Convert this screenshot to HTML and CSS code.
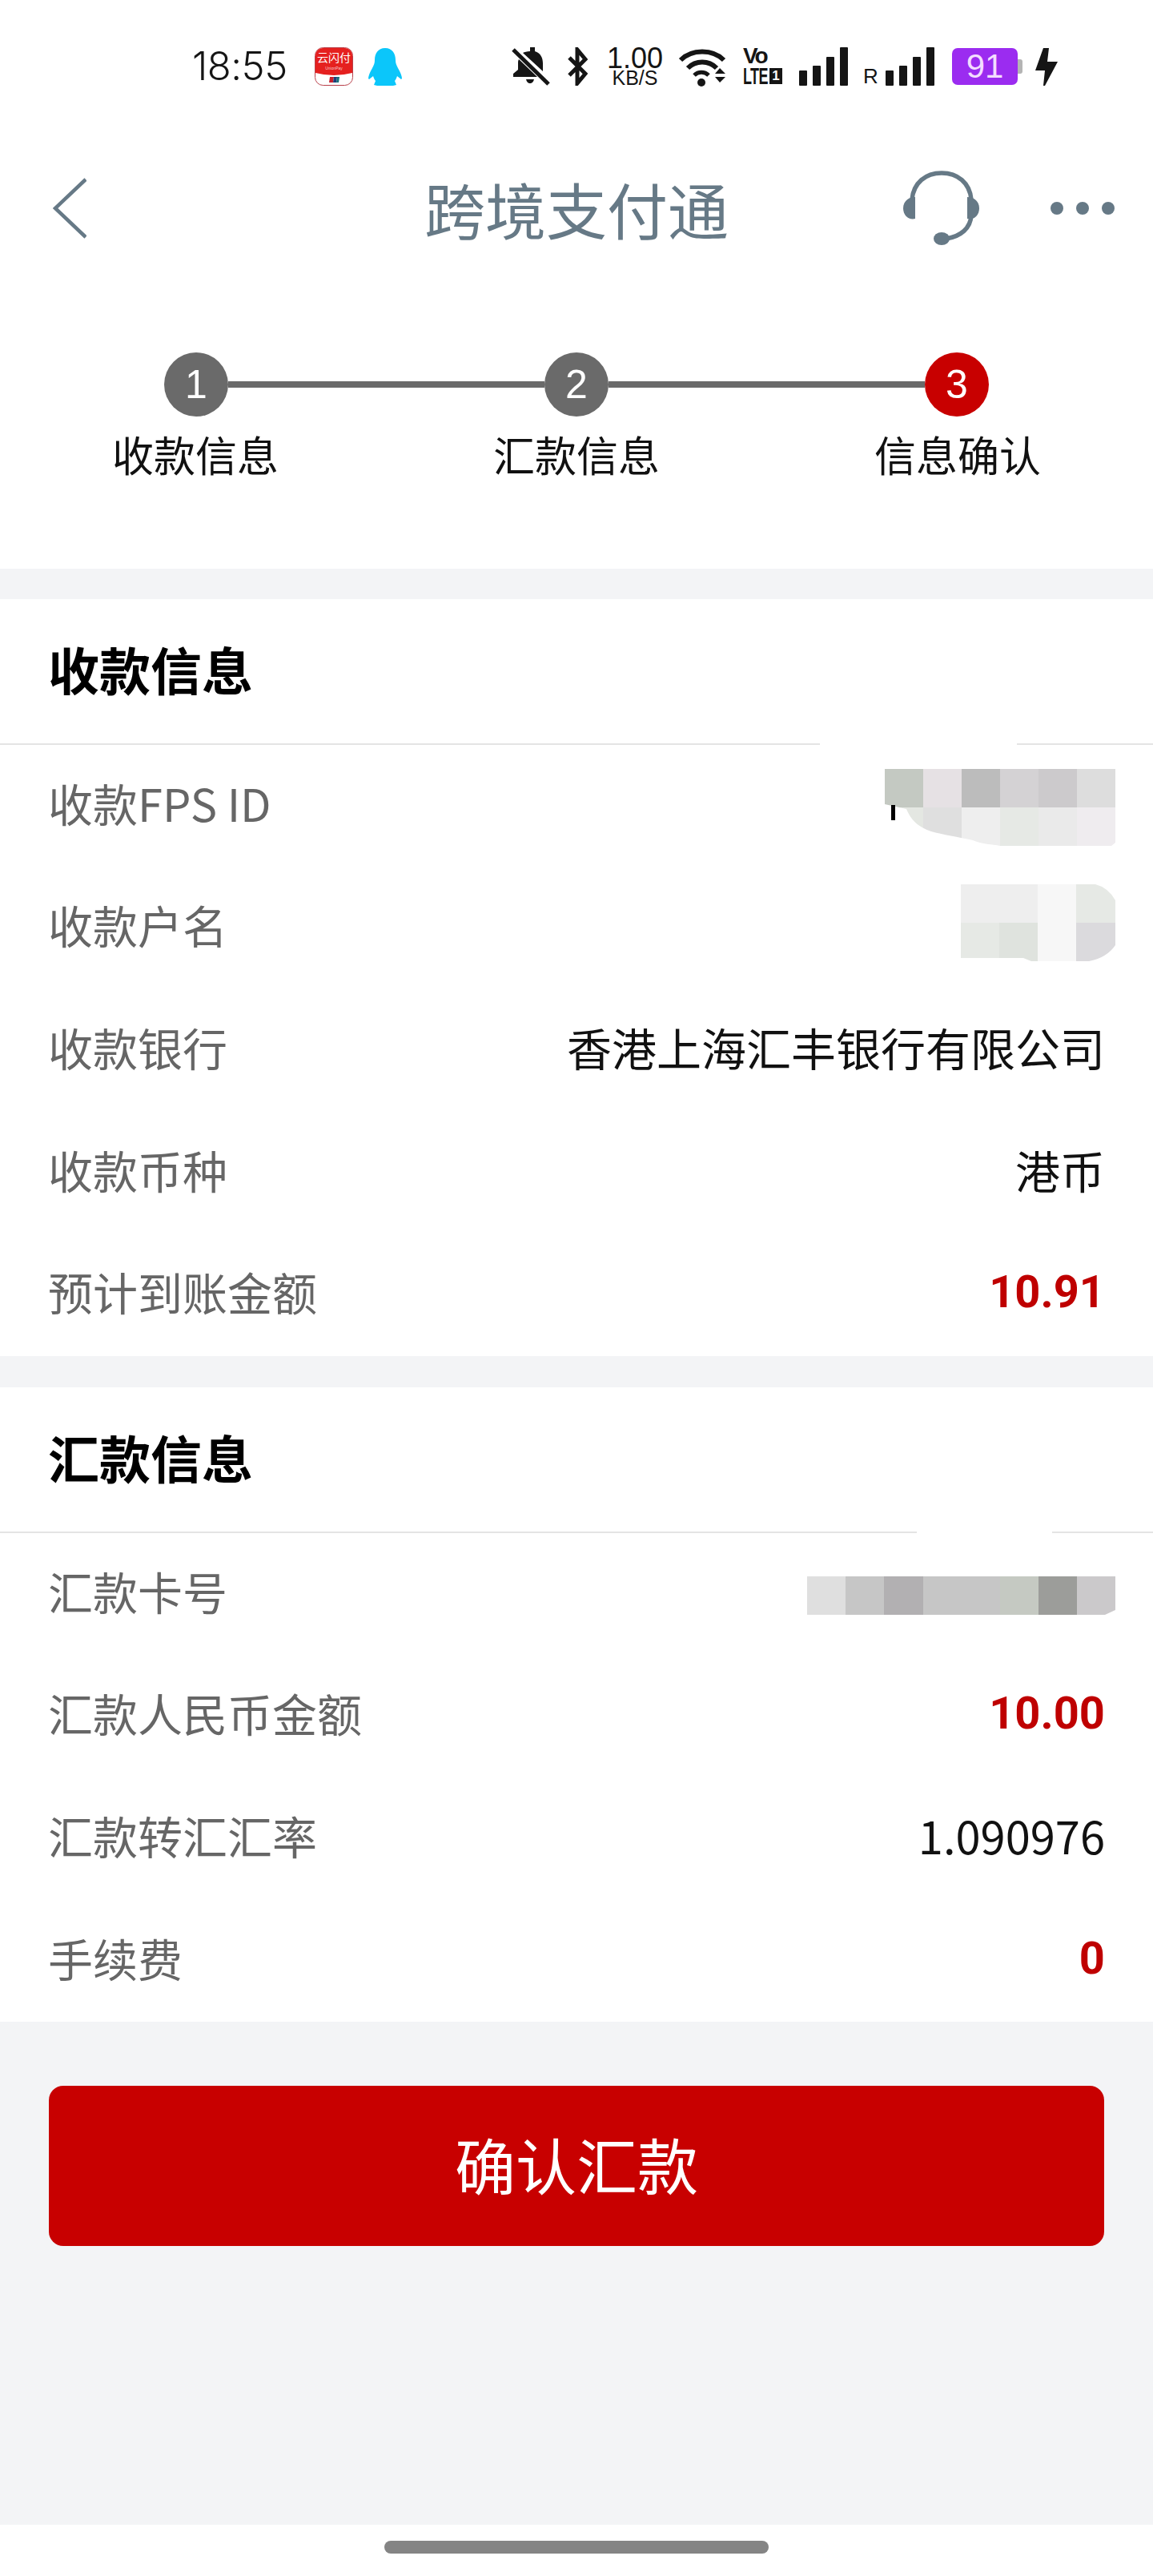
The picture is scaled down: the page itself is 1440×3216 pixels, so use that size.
FILE: index.html
```html
<!DOCTYPE html>
<html lang="zh-CN">
  <head>
    <meta charset="UTF-8" />
    <meta name="viewport" content="width=device-width, initial-scale=1.0" />
    <title>跨境支付通</title>
    <link rel="stylesheet" href="styles.css">
  </head>
  <body>
    <div class="status-bar">
      <div class="status-left">
        <span class="time">18:55</span>
        <svg class="app-icon" width="48" height="48" viewBox="0 0 48 48">
          <rect x="0.5" y="0.5" width="47" height="47" rx="10" fill="#fff" stroke="#b9404a" />
          <path d="M1 32V10A9 9 0 0 1 10 1H38A9 9 0 0 1 47 10V32Q24 38 1 32Z" fill="#e5201f" />
          <text x="24" y="18" class="app-name">云闪付</text>
          <text x="24" y="28" class="app-sub">UnionPay</text>
          <path d="M19 37H24L23 44H18Z" fill="#c8202c" />
          <path d="M24 37H28L27 44H23Z" fill="#1d3f7a" />
          <path d="M28 37H31L30 44H27Z" fill="#16707a" />
        </svg>
        <svg class="qq-icon" width="42" height="47" viewBox="0 0 42 47">
          <path d="M21 0C12 0 8 7 8 15C8 19 7 21 5 25C2 30 0 35 0 38L1 39L6 35C7 38 8 40 9 41L7 46L11 47H31L35 46L33 41C34 40 35 38 36 35L41 39L42 38C42 35 40 30 37 25C35 21 34 19 34 15C34 7 30 0 21 0Z" fill="#0bc6fa" />
        </svg>
      </div>
      <div class="status-right">
        <svg class="bell" width="48" height="48" viewBox="0 0 48 48">
          <path d="M23 0H29V5C36 7 39 13 39 20V30L14 7C16 6 19 5 23 5ZM9 15L32 37H2V33L8 28V19C8 17 8.500 16 9 15ZM18 40H28C27 44 25 45 23 45C21 45 19 44 18 40Z" fill="#151515" />
          <path d="M2 3L46 46" stroke="#151515" stroke-width="5" />
        </svg>
        <svg class="bt" width="25" height="48" viewBox="0 0 25 48">
          <path d="M2 13L22 33L12 45V3L22 15L2 35" fill="none" stroke="#151515" stroke-width="5" />
        </svg>
        <div class="net-speed">
          <span class="speed-num">1.00</span>
          <span class="speed-unit">KB/S</span>
        </div>
        <svg class="wifi" width="60" height="50" viewBox="0 0 60 50">
          <path d="M3 17C17 3 43 3 57 17" fill="none" stroke="#151515" stroke-width="6" />
          <path d="M12 27C22 17 38 17 48 27" fill="none" stroke="#151515" stroke-width="6" />
          <path d="M20 36C25 31 33 31 38 36" fill="none" stroke="#151515" stroke-width="5" />
          <circle cx="29" cy="45" r="5" fill="#151515" />
          <path d="M46 34L52 27L59 34ZM46 38H59L52 45Z" fill="#151515" />
        </svg>
        <div class="volte">
          <span class="vo">Vo</span>
          <div class="lte">
            <span class="lte-text">LTE</span>
            <b class="sim">1</b>
          </div>
        </div>
        <div class="signal">
          <i class="bar b1"></i><i class="bar b2"></i><i class="bar b3"></i><i class="bar b4"></i>
        </div>
        <span class="roam">R</span>
        <div class="signal">
          <i class="bar b1"></i><i class="bar b2"></i><i class="bar b3"></i><i class="bar b4"></i>
        </div>
        <div class="battery">
          <span class="battery-body">91</span>
          <span class="battery-nub"></span>
        </div>
        <svg class="bolt" width="28" height="47" viewBox="0 0 28 47">
          <path d="M10 0H17L15 17H28L12 47H10L12 28H0Z" fill="#151515" />
        </svg>
      </div>
    </div>

    <div class="nav">
      <div class="nav-left">
        <svg width="42" height="76" viewBox="0 0 42 76">
          <path d="M41 2L3 38L41 74" fill="none" stroke="#667986" stroke-width="4.500" />
        </svg>
      </div>
      <div class="nav-title">跨境支付通</div>
      <div class="nav-right">
        <svg class="headset" width="96" height="94" viewBox="0 0 96 94">
          <path d="M11 36C13 15 28 3 48 3C68 3 83 15 85 36" fill="none" stroke="#667986" stroke-width="5.500" />
          <path d="M85 56C84 72 72 82 54 85" fill="none" stroke="#667986" stroke-width="5.500" />
          <path d="M15 33V60C7 62 0 56 0 47C0 39 6 33 15 33Z" fill="#667986" />
          <path d="M80 33V60C88 62 95 56 95 47C95 39 89 33 80 33Z" fill="#667986" />
          <ellipse cx="48" cy="85" rx="10" ry="8" fill="#667986" />
        </svg>
        <div class="dots"><i></i><i></i><i></i></div>
      </div>
    </div>

    <div class="steps">
      <div class="step-track">
        <span class="step-dot">1</span>
        <span class="step-line"></span>
        <span class="step-dot">2</span>
        <span class="step-line"></span>
        <span class="step-dot active">3</span>
      </div>
      <div class="step-labels">
        <span>收款信息</span>
        <span>汇款信息</span>
        <span>信息确认</span>
      </div>
    </div>

    <div class="card">
      <h2 class="card-head">收款信息</h2>
      <div class="card-line gap-one"></div>
      <div class="row">
        <span class="label">收款FPS ID</span>
        <svg class="mosaic mosaic-id" width="288" height="96" viewBox="0 0 288 96">
          <rect x="0" width="48" height="48" fill="#c4c9c2" />
          <rect x="48" width="48" height="48" fill="#e6e1e4" />
          <rect x="96" width="48" height="48" fill="#bcbcbc" />
          <rect x="144" width="48" height="48" fill="#d4d2d4" />
          <rect x="192" width="48" height="48" fill="#cccacc" />
          <rect x="240" width="48" height="48" fill="#dddddd" />
          <rect x="0" y="48" width="48" height="48" fill="#e4e7e2" />
          <rect x="48" y="48" width="48" height="48" fill="#dfdfdf" />
          <rect x="96" y="48" width="48" height="48" fill="#eeeeee" />
          <rect x="144" y="48" width="48" height="48" fill="#e6e9e5" />
          <rect x="192" y="48" width="48" height="48" fill="#eaeaea" />
          <rect x="240" y="48" width="48" height="48" fill="#efecef" />
          <path d="M0 44L27 50C32 62 40 72 58 78C72 82 92 85 110 89C122 94 134 94 144 96H0Z" fill="#fff" />
          <path d="M283 96L288 92V96Z" fill="#fff" />
          <rect x="8" y="45" width="5" height="19" fill="#000" />
        </svg>
      </div>
      <div class="row">
        <span class="label">收款户名</span>
        <svg class="mosaic mosaic-name" width="193" height="96" viewBox="0 0 193 96">
          <rect x="0" width="48" height="48" fill="#eeeeee" />
          <rect x="48" width="48" height="48" fill="#eeeeee" />
          <rect x="96" width="48" height="48" fill="#f7f7f7" />
          <rect x="144" width="49" height="48" fill="#e6e9e5" />
          <rect x="0" y="48" width="48" height="48" fill="#e6e9e5" />
          <rect x="48" y="48" width="48" height="48" fill="#dfe3de" />
          <rect x="96" y="48" width="48" height="48" fill="#f7f7f7" />
          <rect x="144" y="48" width="49" height="48" fill="#dbdadd" />
          <path d="M168 0Q184 4 193 20V0ZM193 76Q182 92 160 96H193ZM0 92H78L88 96H0Z" fill="#fff" />
        </svg>
      </div>
      <div class="row">
        <span class="label">收款银行</span>
        <span class="value">香港上海汇丰银行有限公司</span>
      </div>
      <div class="row">
        <span class="label">收款币种</span>
        <span class="value">港币</span>
      </div>
      <div class="row">
        <span class="label">预计到账金额</span>
        <span class="value strong">10.91</span>
      </div>
    </div>

    <div class="card card-second">
      <h2 class="card-head">汇款信息</h2>
      <div class="card-line gap-two"></div>
      <div class="row">
        <span class="label">汇款卡号</span>
        <svg class="mosaic mosaic-card" width="385" height="48" viewBox="0 0 385 48">
          <rect x="0" width="48" height="48" fill="#dfdfdf" />
          <rect x="48" width="48" height="48" fill="#c6c6c6" />
          <rect x="96" width="49" height="48" fill="#b2b0b2" />
          <rect x="145" width="96" height="48" fill="#c6c6c6" />
          <rect x="241" width="48" height="48" fill="#c5c9c2" />
          <rect x="289" width="48" height="48" fill="#9c9d9a" />
          <rect x="337" width="48" height="48" fill="#cbc9cb" />
          <path d="M372 48L385 42V48Z" fill="#fff" />
        </svg>
      </div>
      <div class="row">
        <span class="label">汇款人民币金额</span>
        <span class="value strong">10.00</span>
      </div>
      <div class="row">
        <span class="label">汇款转汇汇率</span>
        <span class="value">1.090976</span>
      </div>
      <div class="row">
        <span class="label">手续费</span>
        <span class="value strong">0</span>
      </div>
    </div>

    <div class="actions">
      <button class="confirm-btn">确认汇款</button>
    </div>

    <div class="home-area">
      <div class="home-bar"></div>
    </div>
  </body>
</html>
```

FILE: styles.css
```css
* {
  box-sizing: border-box;
}
body {
  margin: 0;
  width: 1440px;
  height: 3216px;
  display: flex;
  flex-direction: column;
  background: #f3f4f6;
  font-family: "Noto Sans CJK SC", "Noto Sans", sans-serif;
}

/* status bar */
.status-bar {
  display: flex;
  justify-content: space-between;
  align-items: center;
  height: 166px;
  padding: 0 119px 0 240px;
  background: #fff;
  color: #151515;
}
.status-left,
.status-right {
  display: flex;
  align-items: center;
}
.time {
  margin-right: 34px;
  font-family: Inter, sans-serif;
  font-size: 49px;
  font-weight: 300;
  letter-spacing: -0.5px;
  line-height: 60px;
}
.app-icon {
  margin-right: 19px;
}
.app-name {
  fill: #fff;
  font-size: 14px;
  text-anchor: middle;
}
.app-sub {
  fill: #f7c9c9;
  font-family: "Liberation Sans", sans-serif;
  font-size: 5px;
  text-anchor: middle;
}
.bt {
  margin-left: 22px;
}
.net-speed {
  display: flex;
  flex-direction: column;
  align-items: center;
  width: 72px;
  margin-left: 23px;
  font-family: "Liberation Sans", sans-serif;
}
.speed-num {
  font-size: 36px;
  line-height: 28px;
}
.speed-unit {
  font-size: 25px;
  line-height: 20px;
}
.wifi {
  margin-left: 18px;
}
.volte {
  display: flex;
  flex-direction: column;
  width: 49px;
  margin-left: 21px;
  font-family: "Liberation Sans", sans-serif;
  font-weight: 700;
}
.vo {
  font-size: 28px;
  line-height: 24px;
  letter-spacing: -2px;
}
.lte {
  display: flex;
  align-items: center;
  line-height: 26px;
}
.lte-text {
  width: 33px;
  font-size: 29px;
  letter-spacing: -1px;
  transform: scaleX(0.62);
  transform-origin: left center;
}
.sim {
  width: 16px;
  height: 20px;
  background: #151515;
  color: #fff;
  font-size: 17px;
  line-height: 20px;
  text-align: center;
}
.signal {
  display: flex;
  align-items: flex-end;
  gap: 7px;
  width: 61px;
  height: 48px;
  margin-left: 21px;
}
.bar {
  width: 10px;
  background: #151515;
  border-radius: 1px;
}
.b1 {
  height: 19px;
}
.b2 {
  height: 25px;
}
.b3 {
  height: 36px;
}
.b4 {
  height: 48px;
}
.roam {
  align-self: flex-end;
  width: 16px;
  margin: 0 -9px 0 19px;
  font-family: "Liberation Sans", sans-serif;
  font-size: 26px;
  line-height: 26px;
}
.battery {
  display: flex;
  align-items: center;
  margin-left: 22px;
}
.battery-body {
  width: 82px;
  height: 46px;
  border-radius: 7px;
  background: #9b2cf0;
  color: #f3ddff;
  font-family: "Liberation Sans", sans-serif;
  font-size: 42px;
  line-height: 46px;
  text-align: center;
}
.battery-nub {
  width: 6px;
  height: 18px;
  border-radius: 0 3px 3px 0;
  background: #b4b4b4;
}
.bolt {
  margin-left: 16px;
}

/* nav */
.nav {
  display: grid;
  grid-template-columns: 1fr auto 1fr;
  align-items: center;
  height: 188px;
  background: #fff;
}
.nav-left {
  display: flex;
  padding-left: 66px;
}
.nav-title {
  color: #667986;
  font-size: 76px;
  line-height: 90px;
}
.nav-right {
  display: flex;
  justify-content: flex-end;
  align-items: center;
  padding-right: 48px;
}
.dots {
  display: flex;
  gap: 16px;
  margin-left: 88px;
}
.dots i {
  width: 16px;
  height: 16px;
  border-radius: 50%;
  background: #667986;
}

/* steps */
.steps {
  height: 356px;
  padding-top: 86px;
  background: #fff;
}
.step-track {
  display: flex;
  align-items: center;
  padding: 0 205px;
}
.step-dot {
  flex: none;
  width: 80px;
  height: 80px;
  border-radius: 50%;
  background: #6a6a6a;
  color: #fff;
  font-family: "Liberation Sans", sans-serif;
  font-size: 50px;
  line-height: 80px;
  text-align: center;
}
.step-dot.active {
  background: #c80000;
}
.step-line {
  flex: 1;
  height: 8px;
  background: #6a6a6a;
}
.step-labels {
  display: grid;
  grid-template-columns: repeat(3, 476px);
  margin-top: 10px;
  padding-left: 6px;
  color: #111;
  font-size: 52px;
  line-height: 74px;
  text-align: center;
}

/* info cards */
.card {
  margin-top: 38px;
  background: #fff;
}
.card-second {
  margin-top: 39px;
}
.card-head {
  margin: 0;
  padding: 0 0 8px 60px;
  color: #000;
  font-size: 64px;
  font-weight: 700;
  line-height: 172px;
}
.card-line {
  height: 2px;
}
.gap-one {
  background: linear-gradient(to right, #e4e4e4 1024px, #fff 1024px, #fff 1270px, #e4e4e4 1270px);
}
.gap-two {
  background: linear-gradient(to right, #e4e4e4 1145px, #fff 1145px, #fff 1314px, #e4e4e4 1314px);
}
.row {
  display: flex;
  justify-content: space-between;
  align-items: center;
  height: 152.600px;
  padding: 0 60px 10px;
}
.label {
  color: #666;
  font-size: 56px;
}
.value {
  color: #111;
  font-size: 56px;
}
.value.strong {
  margin-top: 3px;
  color: #bf0000;
  font-family: Roboto, sans-serif;
  font-weight: 700;
}
.mosaic {
  margin-right: -13px;
}
.mosaic-id {
  margin-top: 14px;
}
.mosaic-name {
  margin-bottom: 3px;
}
.mosaic-card {
  margin-top: 14px;
}

/* bottom */
.actions {
  flex: 1;
  padding: 80px 61px 0;
}
.confirm-btn {
  display: block;
  width: 100%;
  height: 200px;
  padding: 0 0 6px;
  border: 0;
  border-radius: 18px;
  background: #c80000;
  color: #fff;
  font-family: inherit;
  font-size: 76px;
}
.home-area {
  display: flex;
  justify-content: center;
  height: 64px;
  padding-top: 20px;
  background: #fff;
}
.home-bar {
  width: 480px;
  height: 16px;
  border-radius: 8px;
  background: #848484;
}
```
